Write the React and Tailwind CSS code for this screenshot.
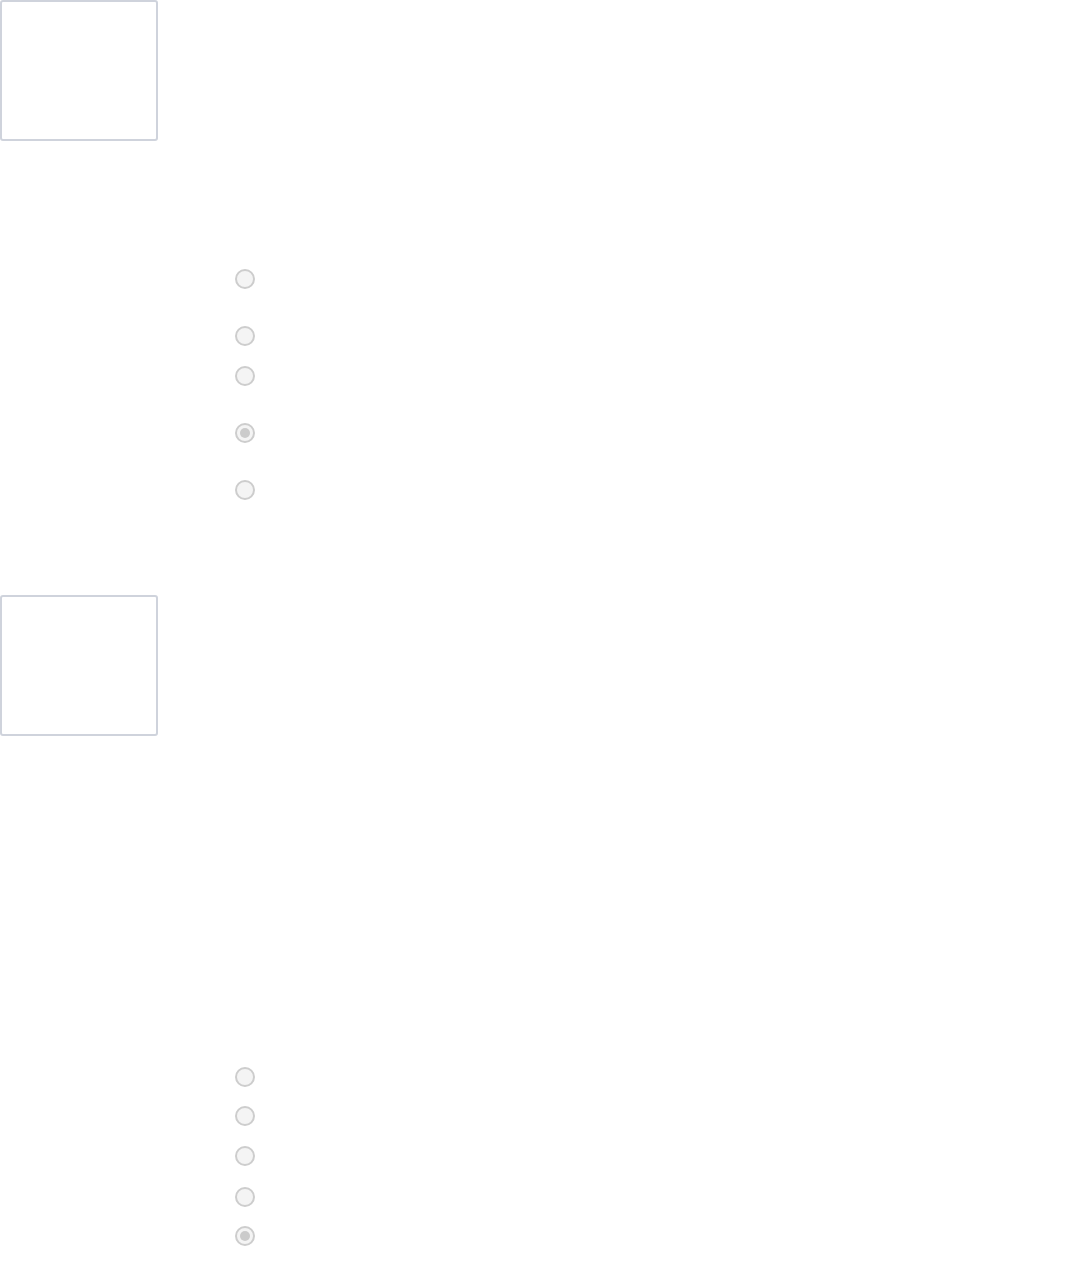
import React from "react";

const Radio = ({ checked, className = "" }) => (
  <span
    className={`flex items-center justify-center w-[20px] h-[20px] rounded-full border-2 border-[#cdcdcd] bg-[#f4f4f4] ${className}`}
  >
    {checked && <span className="w-[10px] h-[10px] rounded-full bg-[#cbcbcb]" />}
  </span>
);

const Frame = ({ className = "" }) => (
  <div
    className={`w-[158px] h-[141px] rounded-[3px] border-2 border-[#cfd3dc] bg-white ${className}`}
  />
);

const App = () => {
  return (
    <div className="min-h-[1285px] w-[1087px] bg-white font-['Liberation_Sans',sans-serif]">
      <Frame />

      {/* first option group */}
      <div className="flex flex-col pl-[235px] pt-[128px]">
        <Radio />
        <Radio className="mt-[37px]" />
        <Radio className="mt-[20px]" />
        <Radio checked className="mt-[37px]" />
        <Radio className="mt-[37px]" />
      </div>

      <Frame className="mt-[95px]" />

      {/* second option group */}
      <div className="flex flex-col pl-[235px] pt-[331px]">
        <Radio />
        <Radio className="mt-[19px]" />
        <Radio className="mt-[20px]" />
        <Radio className="mt-[21px]" />
        <Radio checked className="mt-[19px]" />
      </div>
    </div>
  );
};

export default App;
